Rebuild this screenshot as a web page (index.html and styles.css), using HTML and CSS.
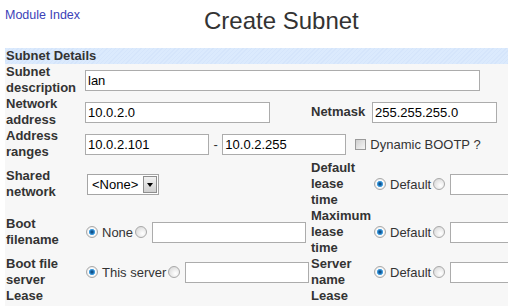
FILE: index.html
```html
<!DOCTYPE html>
<html lang="en">

<head>
<meta charset="UTF-8">
<meta name="viewport" content="width=device-width, initial-scale=1.0">
<title>Create Subnet</title>
<link rel="stylesheet" href="styles.css">
</head>

<body>
<div class="header">
	<a class="module-link" href="#">Module Index</a>
	<h1 class="title">Create Subnet</h1>
</div>

<div class="section">
	<div class="section-head">Subnet Details</div>
	<div class="form-grid">
		<label class="label" for="desc">Subnet description</label>
		<div class="field span-3">
			<input class="input-field w-desc" id="desc" type="text" value="lan">
		</div>

		<label class="label" for="network">Network address</label>
		<div class="field">
			<input class="input-field w-net" id="network" type="text" value="10.0.2.0">
		</div>
		<label class="label" for="netmask">Netmask</label>
		<div class="field">
			<input class="input-field w-mask" id="netmask" type="text" value="255.255.255.0">
		</div>

		<label class="label" for="range-from">Address ranges</label>
		<div class="field span-3">
			<input class="input-field w-range" id="range-from" type="text" value="10.0.2.101">
			<span class="dash">-</span>
			<input class="input-field w-range" id="range-to" type="text" value="10.0.2.255">
			<input class="checkbox" id="bootp" type="checkbox">
			<span class="option-text">Dynamic BOOTP ?</span>
		</div>

		<label class="label" for="shared">Shared network</label>
		<div class="field">
			<span class="select-wrap">
				<select class="select-field" id="shared">
					<option>&lt;None&gt;</option>
				</select>
				<span class="select-arrow"></span>
			</span>
		</div>
		<label class="label">Default lease time</label>
		<div class="field">
			<input class="radio first" type="radio" name="default-lease" checked>
			<span class="option-text">Default</span>
			<input class="radio second" type="radio" name="default-lease">
			<input class="input-field w-time" type="text">
		</div>

		<label class="label">Boot filename</label>
		<div class="field">
			<input class="radio first-left" type="radio" name="boot-file" checked>
			<span class="option-text">None</span>
			<input class="radio second" type="radio" name="boot-file">
			<input class="input-field w-boot" type="text">
		</div>
		<label class="label">Maximum lease time</label>
		<div class="field">
			<input class="radio first" type="radio" name="max-lease" checked>
			<span class="option-text">Default</span>
			<input class="radio second" type="radio" name="max-lease">
			<input class="input-field w-time" type="text">
		</div>

		<label class="label">Boot file server</label>
		<div class="field">
			<input class="radio first-left" type="radio" name="boot-server" checked>
			<span class="option-text">This server</span>
			<input class="radio second" type="radio" name="boot-server">
			<input class="input-field w-server" type="text">
		</div>
		<label class="label">Server name</label>
		<div class="field">
			<input class="radio first" type="radio" name="server-name" checked>
			<span class="option-text">Default</span>
			<input class="radio second" type="radio" name="server-name">
			<input class="input-field w-time" type="text">
		</div>

		<label class="label label-top">Lease length for BOOTP clients</label>
		<div class="field"></div>
		<label class="label label-top">Lease end for BOOTP clients</label>
		<div class="field"></div>
	</div>
</div>
</body>

</html>
```

FILE: styles.css
```css
html, body {
	overflow: hidden;
}

body {
	margin: 0;
	font-family: "Liberation Sans", Arial, sans-serif;
	font-size: 13px;
	color: #333;
	background-color: #fff;
}

.header {
	display: flex;
	height: 48px;
	padding-left: 5px;
	box-sizing: border-box;
}

.module-link {
	width: 199px;
	margin-top: 8px;
	font-size: 12.5px;
	line-height: 15px;
	color: #3b42b8;
	text-decoration: none;
}

.title {
	margin: 7px 0 0;
	font-size: 24px;
	line-height: 28px;
	font-weight: normal;
	color: #333;
}

.section {
	margin-left: 5px;
}

.section-head {
	height: 16px;
	padding-left: 1px;
	line-height: 16px;
	font-weight: bold;
	background-color: #d8e8fc;
	background-image: repeating-linear-gradient(135deg, #d5e5fb 0, #d5e5fb 1px, #dbeafd 1px, #dbeafd 3px);
}

.form-grid {
	display: grid;
	grid-template-columns: 80px 225px 62px 200px;
	background-color: #f7f7f7;
}

.label {
	align-self: center;
	padding-left: 1px;
	line-height: 16px;
	font-weight: bold;
}

.label-top {
	align-self: start;
}

.field {
	display: flex;
	align-items: center;
	white-space: nowrap;
}

.span-3 {
	grid-column: span 3;
}

.input-field {
	height: 21px;
	margin: 0;
	padding: 0 2px;
	border: 1px solid #acacac;
	box-sizing: border-box;
	background-color: #fff;
	font-family: inherit;
	font-size: 13px;
	color: #000;
	outline: none;
}

.w-desc { width: 395px; }
.w-net { width: 185px; }
.w-mask { width: 125px; }
.w-range { width: 124px; }
.w-boot { width: 154px; margin-left: 5px; }
.w-server { width: 124px; margin-left: 5px; }
.w-time { width: 80px; margin-left: 5px; }

.dash {
	padding: 0 4.5px;
}

.checkbox {
	appearance: none;
	width: 11px;
	height: 11px;
	margin: 0 4px 0 9px;
	border: 1px solid #9a9a9a;
	box-sizing: border-box;
	background: linear-gradient(135deg, #cfcfcf, #f6f6f6);
}

.option-text {
	margin-left: 4px;
}

.checkbox + .option-text {
	margin-left: 0;
}

.radio {
	appearance: none;
	width: 12px;
	height: 12px;
	margin: 0;
	border: 1px solid #a8a8a8;
	border-radius: 50%;
	box-sizing: border-box;
	background: radial-gradient(circle at 65% 65%, #fff 0, #f2f2f2 30%, #d2d2d2 100%);
}

.radio:checked {
	background: radial-gradient(circle at 50% 50%, #0b3c66 0, #1b6aac 1.5px, #49a6e6 2.8px, #fff 3.4px, #f4f4f4 4px, #dcdcdc 100%);
}

.radio.first {
	margin-left: 2px;
}

.radio.first-left {
	margin-left: 1px;
}

.radio.second {
	margin-left: 2px;
}

.select-wrap {
	position: relative;
	display: inline-block;
	margin-left: 2px;
}

.select-field {
	display: block;
	appearance: none;
	width: 72px;
	height: 21px;
	margin: 0;
	padding: 0 0 0 4px;
	border: 1px solid #a5a5a5;
	border-radius: 0;
	background-color: #fff;
	font-family: inherit;
	font-size: 13px;
	color: #000;
	outline: none;
}

.select-arrow {
	position: absolute;
	top: 2px;
	right: 2px;
	width: 14px;
	height: 17px;
	border: 1px solid #8e8e8e;
	box-sizing: border-box;
	background: linear-gradient(#f2f2f2, #cfcfcf);
	pointer-events: none;
}

.select-arrow::after {
	content: "";
	position: absolute;
	top: 6px;
	left: 3px;
	border-top: 4px solid #000;
	border-left: 3.5px solid transparent;
	border-right: 3.5px solid transparent;
}
```
